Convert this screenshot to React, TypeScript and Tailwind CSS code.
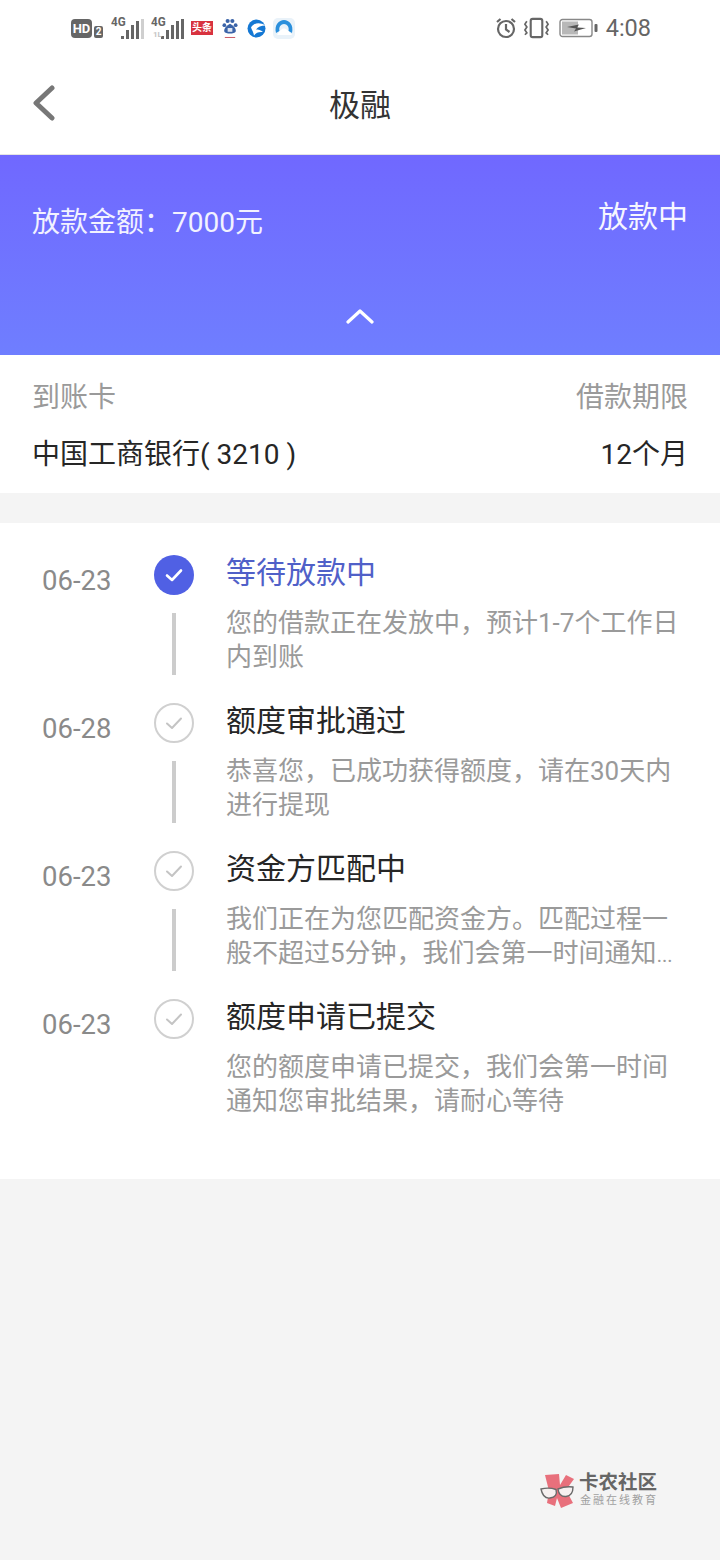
import React from "react";

const font = { fontFamily: 'Roboto, "Noto Sans CJK SC", sans-serif' };

function Check({ color, w = 2.2 }: { color: string; w?: number }) {
  return (
    <svg width="18" height="14" viewBox="0 0 18 14" fill="none">
      <path d="M2 7.5 L7 12 L16 2.5" stroke={color} strokeWidth={w} strokeLinecap="round" strokeLinejoin="round" />
    </svg>
  );
}

function Bars({ last }: { last: string }) {
  const hs = [3, 9, 14, 18];
  return (
    <div className="flex items-end gap-[2px]">
      {hs.map((h, i) => (
        <div key={i} className="w-[3px] bg-[#666666]" style={{ height: h }} />
      ))}
      <div className="w-[3px] h-[20px]" style={{ background: last }} />
    </div>
  );
}

function StatusBar() {
  return (
    <div className="h-[56px] flex items-center justify-between pl-[71px] pr-[69px] text-[#666666]">
      <div className="flex items-center h-[40px]">
        <div className="w-[21px] h-[19px] rounded-[4px] bg-[#666666] text-white text-[13px] font-bold leading-[19px] text-center">HD</div>
        <div className="ml-[2px] mt-[7px] w-[9px] h-[12px] rounded-[2px] bg-[#666666] text-white text-[10px] font-bold leading-[12px] text-center">2</div>
        <div className="relative ml-[8px] w-[33px] h-[21px] flex justify-end items-end">
          <span className="absolute left-0 top-[-3px] text-[13px] font-bold leading-[13px] scale-x-90 origin-left">4G</span>
          <Bars last="#cfcfcf" />
        </div>
        <div className="relative ml-[7px] w-[33px] h-[21px] flex justify-end items-end">
          <span className="absolute left-0 top-[-3px] text-[13px] font-bold leading-[13px] scale-x-90 origin-left">4G</span>
          <span className="absolute left-[2px] bottom-0 text-[8px] font-bold leading-[8px] text-[#c4c4c4]">1L</span>
          <Bars last="#666666" />
        </div>
        <div className="ml-[7px] w-[22px] h-[14px] bg-[#d8323f] text-white text-[10px] font-bold leading-[14px] text-center whitespace-nowrap">头条</div>
        <svg className="ml-[9px]" width="16" height="21" viewBox="0 0 17 22">
          <circle cx="2.5" cy="7.5" r="2" fill="#3a63a8" />
          <circle cx="14.5" cy="7.5" r="2" fill="#3a63a8" />
          <circle cx="6" cy="3" r="2.2" fill="#3a63a8" />
          <circle cx="11" cy="3" r="2.2" fill="#3a63a8" />
          <path d="M8.5 6 C5 8 1.5 11 2.5 14.5 C3.5 17 13.5 17 14.5 14.5 C15.5 11 12 8 8.5 6Z" fill="#3a63a8" />
          <rect x="6" y="10.5" width="5" height="4" fill="#dfe6f2" />
          <rect x="3" y="20" width="11" height="1" fill="#c8505a" />
        </svg>
        <svg className="ml-[9px]" width="19" height="19" viewBox="0 0 19 19">
          <circle cx="9.5" cy="9.5" r="9" fill="#1478d4" />
          <path d="M4 8.5 C7 3.5 13 3 18.5 6.5 C14 6.5 11 8 9 10.5 C11 10.5 14 11 16 13 C12 12.5 9 13.5 7 16.5 C6.5 13.5 5 11 4 8.5Z" fill="#ffffff" />
        </svg>
        <div className="ml-[7px] w-[22px] h-[21px] rounded-[5px] bg-[#e9f2f9] flex items-center justify-center">
          <svg width="20" height="19" viewBox="0 0 20 19">
            <path d="M2 14 C0 6 5 1 10 1 C15 1 20 6 18 14 L14.5 12 C15.5 8 13 5 10 5 C7 5 4.5 8 5.5 12 Z" fill="#2a8fdc" />
            <path d="M3 16 C6 11 8 9.5 10 9.5 C12 9.5 15 12 18 16 Z" fill="#ffffff" />
          </svg>
        </div>
      </div>
      <div className="flex items-center">
        <svg width="22" height="22" viewBox="0 0 22 22" fill="none" stroke="#666666" strokeWidth="2.2">
          <circle cx="11" cy="12" r="8" />
          <path d="M11 7 V12.5 L14.5 15" />
          <path d="M2 5 L5.5 2 M20 5 L16.5 2" />
        </svg>
        <svg className="ml-[6px]" width="27" height="22" viewBox="0 0 28 22" fill="none" stroke="#666666" strokeWidth="2.2">
          <rect x="8" y="1.5" width="12" height="19" rx="2" />
          <path d="M4 4 L2 7 L4 10 L2 13 L4 16 L2 18" strokeWidth="1.8" />
          <path d="M24 4 L26 7 L24 10 L26 13 L24 16 L26 18" strokeWidth="1.8" />
        </svg>
        <svg className="ml-[9px]" width="39" height="20" viewBox="0 0 39 20" fill="none">
          <rect x="1" y="1.5" width="32" height="17" rx="2.5" stroke="#888888" strokeWidth="1.4" />
          <rect x="3" y="3.5" width="16" height="13" fill="#b8b8b8" />
          <path d="M8 9 L20 6.5 L18 9.5 L27 10 L15 13.5 L17 10.5Z" fill="#555555" />
          <rect x="35.5" y="6" width="3" height="8" rx="1" fill="#666666" />
        </svg>
        <span className="ml-[8px] mt-[2px] text-[23.5px] leading-none">4:08</span>
      </div>
    </div>
  );
}

const steps = [
  { date: "06-23", title: "等待放款中", l1: "您的借款正在发放中，预计1-7个工作日", l2: "内到账", active: true },
  { date: "06-28", title: "额度审批通过", l1: "恭喜您，已成功获得额度，请在30天内", l2: "进行提现" },
  { date: "06-23", title: "资金方匹配中", l1: "我们正在为您匹配资金方。匹配过程一", l2: "般不超过5分钟，我们会第一时间通知", more: true },
  { date: "06-23", title: "额度申请已提交", l1: "您的额度申请已提交，我们会第一时间", l2: "通知您审批结果，请耐心等待", last: true },
];

function Step({ s }: { s: (typeof steps)[number] }) {
  return (
    <div className="h-[148px] flex">
      <div className="w-[154px] pl-[42px] pt-[6px] text-[27.5px] leading-[40px] text-[#8a8a8a]">{s.date}</div>
      <div className="w-[40px] flex flex-col items-center">
        {s.active ? (
          <div className="w-[40px] h-[40px] rounded-full bg-[#5060e4] flex items-center justify-center">
            <Check color="#ffffff" w={2.6} />
          </div>
        ) : (
          <div className="w-[40px] h-[40px] rounded-full border-2 border-[#d0d0d0] flex items-center justify-center">
            <Check color="#c4c4c4" w={2} />
          </div>
        )}
        {!s.last && <div className="mt-[18px] w-[4px] h-[62px] bg-[#cccccc]" />}
      </div>
      <div className="ml-[32px] flex-1 min-w-0">
        <div className={`text-[30px] leading-[36px] whitespace-nowrap ${s.active ? "text-[#5060c8]" : "text-[#262626]"}`}>{s.title}</div>
        <div className="mt-[15px] text-[26px] leading-[34px] text-[#9a9a9a] whitespace-nowrap">
          <div>{s.l1}</div>
          <div>
            {s.l2}
            {s.more && <span className="text-[20px]">...</span>}
          </div>
        </div>
      </div>
    </div>
  );
}

export default function App() {
  return (
    <div className="w-[720px] h-[1560px] bg-[#f4f4f4] flex flex-col relative overflow-hidden" style={font}>
      <div className="bg-white">
        <StatusBar />
        <div className="h-[99px] relative flex items-center justify-center border-b border-[#e4e4e4]">
          <svg className="absolute left-[32px] top-[29px]" width="24" height="36" viewBox="0 0 24 36" fill="none">
            <path d="M20 3 L4 18 L20 33" stroke="#777777" strokeWidth="5" strokeLinecap="round" strokeLinejoin="round" />
          </svg>
          <span className="text-[31px] text-[#333333] leading-none">极融</span>
        </div>
      </div>

      <div className="h-[200px] bg-gradient-to-b from-[#7068ff] to-[#6f7eff] text-white px-[32px] relative">
        <div className="flex justify-between pt-[44px]">
          <span className="text-[28px] leading-[48px] text-[#f2f2ff]">放款金额：7000元</span>
          <span className="text-[30px] leading-[36px] text-[#f6f6ff]">放款中</span>
        </div>
        <div className="flex justify-center mt-[60px]">
          <svg width="28" height="18" viewBox="0 0 28 18" fill="none">
            <path d="M2 15 L14 4 L26 15" stroke="#ffffff" strokeWidth="3.2" strokeLinecap="round" strokeLinejoin="round" />
          </svg>
        </div>
      </div>

      <div className="h-[138px] bg-white px-[32px] pt-[23px]">
        <div className="flex justify-between text-[28px] leading-[40px] text-[#9a9a9a]">
          <span>到账卡</span>
          <span>借款期限</span>
        </div>
        <div className="mt-[17px] flex justify-between text-[28px] leading-[40px] text-[#262626]">
          <span>中国工商银行( 3210 )</span>
          <span>12个月</span>
        </div>
      </div>

      <div className="mt-[30px] h-[656px] bg-white pt-[32px]">
        {steps.map((s, i) => (
          <Step key={i} s={s} />
        ))}
      </div>

      <div className="absolute left-[535px] top-[1465px] flex items-center">
        <svg width="44" height="50" viewBox="0 0 44 50">
          <path d="M10 10 L24 9 L25 20 L31 10 L39 14 L31 25 L38 38 L26 43 L22 33 L20 41 L12 38 L14 26Z" fill="#e8707c" />
          <path d="M6 24 Q14 22 21 24.5 Q23 32 15 33 Q8 34 6 24Z" fill="#f6f0f0" stroke="#6a6a6a" strokeWidth="1.4" />
          <path d="M23 24 Q30 21 38 22 Q38 31 31 31.5 Q24 32 23 24Z" fill="#f6f0f0" stroke="#6a6a6a" strokeWidth="1.4" />
        </svg>
        <div className="flex flex-col">
          <span className="text-[19.5px] font-bold leading-[22px] text-[#666666]">卡农社区</span>
          <span className="ml-[1px] text-[11px] leading-[14px] tracking-[2px] text-[#a0a0a0]">金融在线教育</span>
        </div>
      </div>
    </div>
  );
}
